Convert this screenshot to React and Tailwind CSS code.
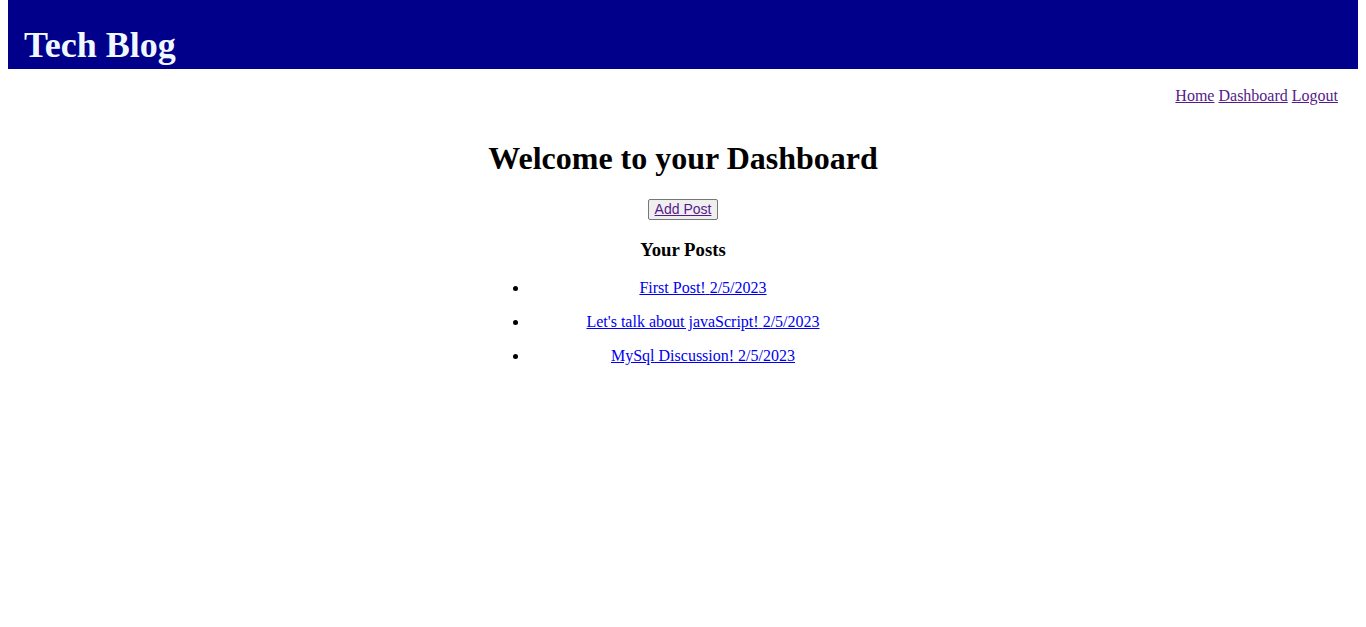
import React from "react";

const posts = [
  { id: 1, title: "First Post!", date: "2/5/2023" },
  { id: 2, title: "Let's talk about javaScript!", date: "2/5/2023" },
  { id: 3, title: "MySql Discussion!", date: "2/5/2023" },
];

const App = () => {
  return (
    <div className="min-h-[627px] bg-white px-2 font-['Liberation_Serif',serif] text-black">
      {/* Header bar */}
      <header className="flex h-[69px] items-end bg-[#00008b] pl-4 pb-[3px]">
        <h1 className="text-[36px] font-bold leading-[41px] text-[#f0f8ff]">Tech Blog</h1>
      </header>

      {/* Nav links */}
      <nav className="mt-[18px] flex justify-end gap-[4px] pr-5 text-[16px] leading-[18px]">
        <a href="#" className="text-[#551a8b] underline">Home</a>
        <a href="#" className="text-[#551a8b] underline">Dashboard</a>
        <a href="#" className="text-[#551a8b] underline">Logout</a>
      </nav>

      <main className="flex flex-col items-center">
        <h2 className="mt-[35px] text-[32px] font-bold leading-[37px]">Welcome to your Dashboard</h2>

        <button className="mt-[22px] flex h-[21px] w-[70px] items-center justify-center whitespace-nowrap rounded-[2px] border border-[#767676] bg-[#efefef] px-0 font-['Liberation_Sans',sans-serif] text-[14px] leading-[15px]">
          <a href="#" className="text-[#551a8b] underline">Add Post</a>
        </button>

        <h3 className="mt-[19px] text-[18.72px] font-bold leading-[22px]">Your Posts</h3>

        <ul className="mt-[18px] w-[388px] list-disc pl-10 text-[16px] leading-[18px]">
          {posts.map((post) => (
            <li key={post.id} className="mb-4 text-center">
              <a href="#" className="text-[#0000ee] underline">
                {post.title} {post.date}
              </a>
            </li>
          ))}
        </ul>
      </main>
    </div>
  );
};

export default App;
